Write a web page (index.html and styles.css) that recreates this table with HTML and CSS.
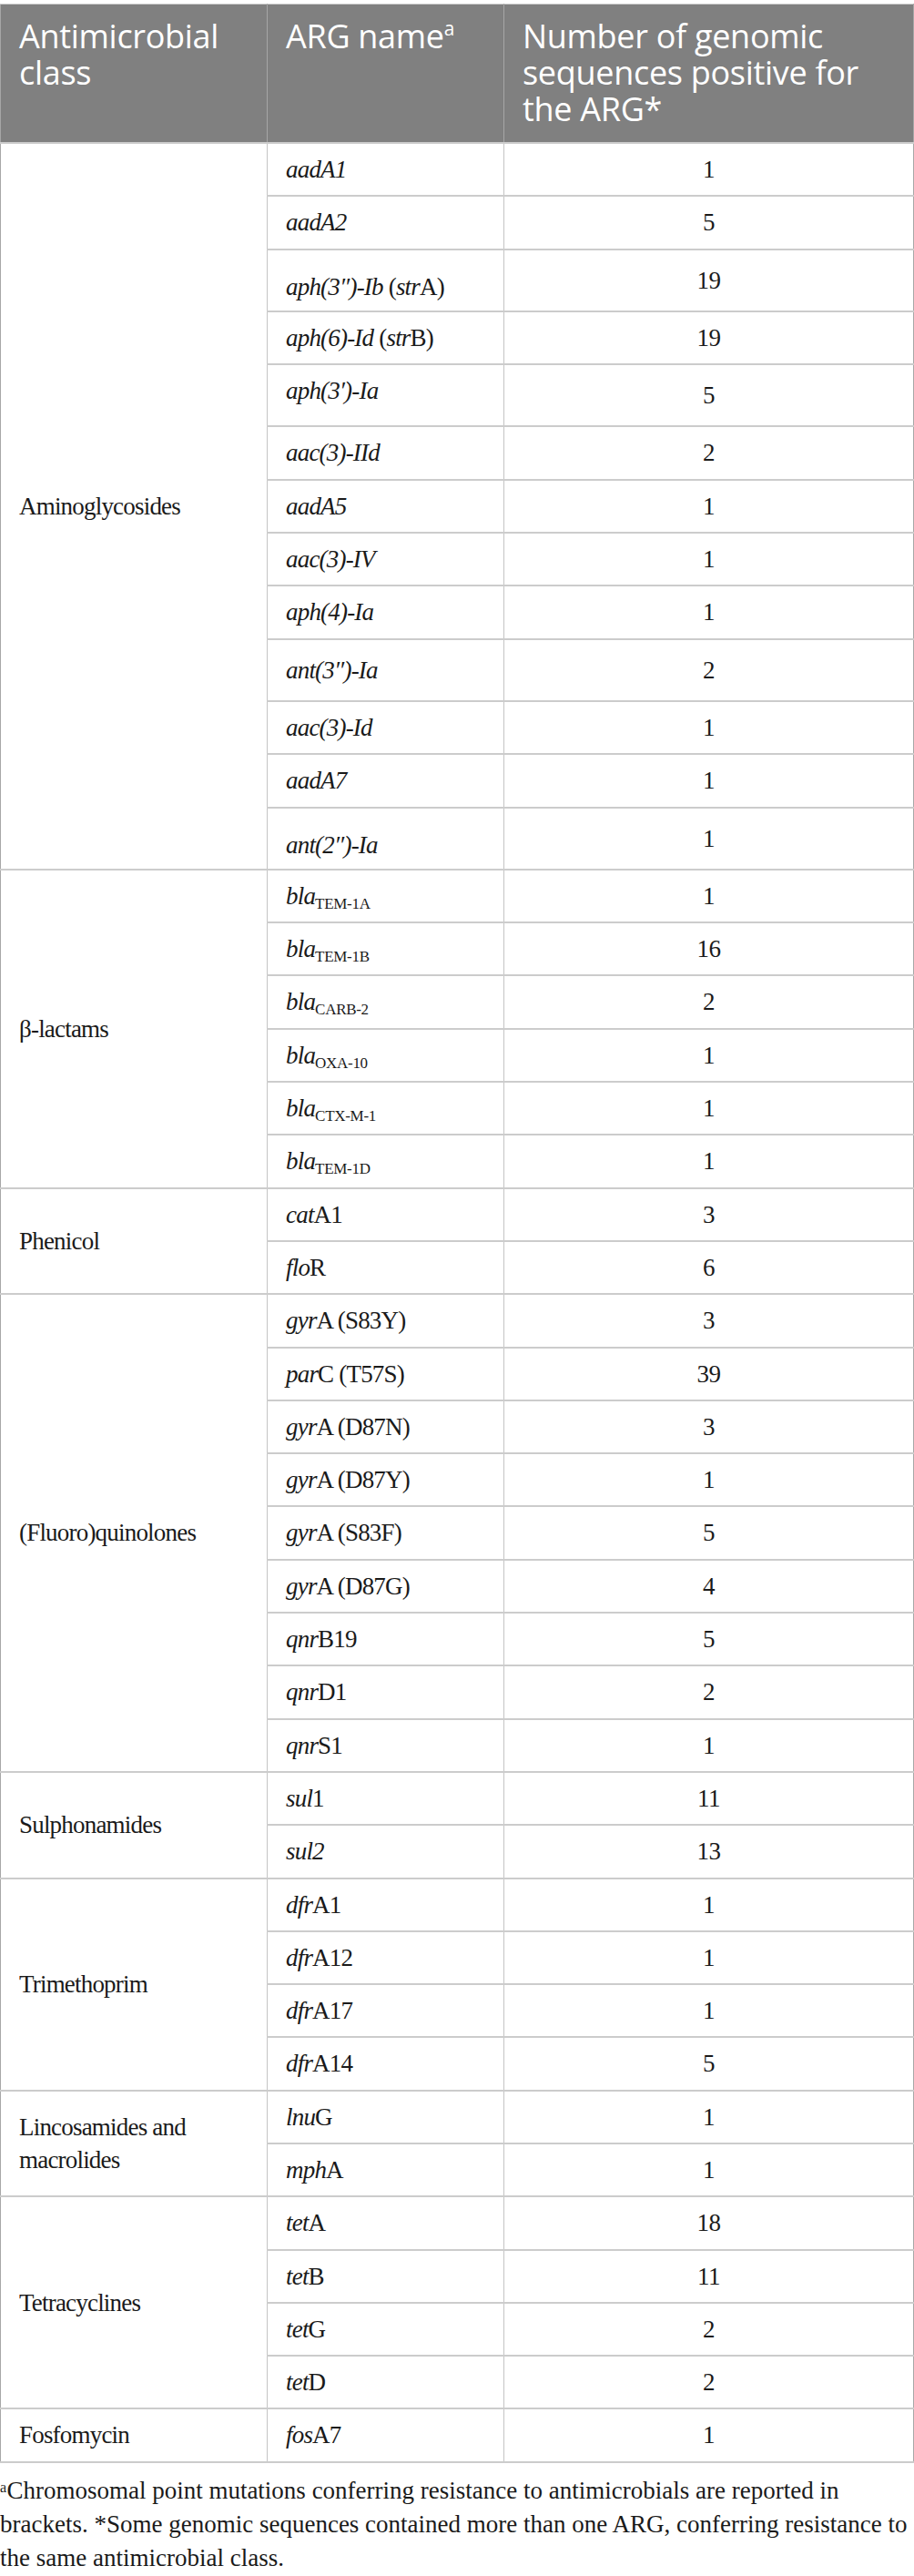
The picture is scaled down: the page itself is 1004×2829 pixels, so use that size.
FILE: index.html
```html
<!DOCTYPE html>
<html lang="en">
<head>
<meta charset="utf-8">
<title>ARG table</title>
<link rel="stylesheet" href="styles.css">
</head>
<body>
<table class="arg-table">
  <colgroup>
    <col class="c1">
    <col class="c2">
    <col class="c3">
  </colgroup>
  <thead>
    <tr>
      <th>Antimicrobial class</th>
      <th>ARG name<sup>a</sup></th>
      <th>Number of genomic sequences positive for the ARG*</th>
    </tr>
  </thead>
  <tbody class="grp">
    <tr><td class="cls" rowspan="13">Aminoglycosides</td><td><i>aadA1</i></td><td class="num">1</td></tr>
    <tr><td><i>aadA2</i></td><td class="num">5</td></tr>
    <tr class="tall"><td class="low"><i>aph(3″)-Ib</i> (<i>str</i>A)</td><td class="num">19</td></tr>
    <tr><td><i>aph(6)-Id</i> (<i>str</i>B)</td><td class="num">19</td></tr>
    <tr class="tall"><td class="high"><i>aph(3′)-Ia</i></td><td class="num">5</td></tr>
    <tr><td><i>aac(3)-IId</i></td><td class="num">2</td></tr>
    <tr><td><i>aadA5</i></td><td class="num">1</td></tr>
    <tr><td><i>aac(3)-IV</i></td><td class="num">1</td></tr>
    <tr><td><i>aph(4)-Ia</i></td><td class="num">1</td></tr>
    <tr class="tall"><td class="mid"><i>ant(3″)-Ia</i></td><td class="num">2</td></tr>
    <tr><td><i>aac(3)-Id</i></td><td class="num">1</td></tr>
    <tr><td><i>aadA7</i></td><td class="num">1</td></tr>
    <tr class="tall"><td class="low"><i>ant(2″)-Ia</i></td><td class="num">1</td></tr>
  </tbody>
  <tbody class="grp">
    <tr><td class="cls" rowspan="6">β-lactams</td><td><i>bla</i><sub>TEM-1A</sub></td><td class="num">1</td></tr>
    <tr><td><i>bla</i><sub>TEM-1B</sub></td><td class="num">16</td></tr>
    <tr><td><i>bla</i><sub>CARB-2</sub></td><td class="num">2</td></tr>
    <tr><td><i>bla</i><sub>OXA-10</sub></td><td class="num">1</td></tr>
    <tr><td><i>bla</i><sub>CTX-M-1</sub></td><td class="num">1</td></tr>
    <tr><td><i>bla</i><sub>TEM-1D</sub></td><td class="num">1</td></tr>
  </tbody>
  <tbody class="grp">
    <tr><td class="cls" rowspan="2">Phenicol</td><td><i>cat</i>A1</td><td class="num">3</td></tr>
    <tr><td><i>flo</i>R</td><td class="num">6</td></tr>
  </tbody>
  <tbody class="grp">
    <tr><td class="cls" rowspan="9">(Fluoro)quinolones</td><td><i>gyr</i>A (S83Y)</td><td class="num">3</td></tr>
    <tr><td><i>par</i>C (T57S)</td><td class="num">39</td></tr>
    <tr><td><i>gyr</i>A (D87N)</td><td class="num">3</td></tr>
    <tr><td><i>gyr</i>A (D87Y)</td><td class="num">1</td></tr>
    <tr><td><i>gyr</i>A (S83F)</td><td class="num">5</td></tr>
    <tr><td><i>gyr</i>A (D87G)</td><td class="num">4</td></tr>
    <tr><td><i>qnr</i>B19</td><td class="num">5</td></tr>
    <tr><td><i>qnr</i>D1</td><td class="num">2</td></tr>
    <tr><td><i>qnr</i>S1</td><td class="num">1</td></tr>
  </tbody>
  <tbody class="grp">
    <tr><td class="cls" rowspan="2">Sulphonamides</td><td><i>sul</i>1</td><td class="num">11</td></tr>
    <tr><td><i>sul2</i></td><td class="num">13</td></tr>
  </tbody>
  <tbody class="grp">
    <tr><td class="cls" rowspan="4">Trimethoprim</td><td><i>dfr</i>A1</td><td class="num">1</td></tr>
    <tr><td><i>dfr</i>A12</td><td class="num">1</td></tr>
    <tr><td><i>dfr</i>A17</td><td class="num">1</td></tr>
    <tr><td><i>dfr</i>A14</td><td class="num">5</td></tr>
  </tbody>
  <tbody class="grp">
    <tr><td class="cls" rowspan="2">Lincosamides and macrolides</td><td><i>lnu</i>G</td><td class="num">1</td></tr>
    <tr><td><i>mph</i>A</td><td class="num">1</td></tr>
  </tbody>
  <tbody class="grp">
    <tr><td class="cls" rowspan="4">Tetracyclines</td><td><i>tet</i>A</td><td class="num">18</td></tr>
    <tr><td><i>tet</i>B</td><td class="num">11</td></tr>
    <tr><td><i>tet</i>G</td><td class="num">2</td></tr>
    <tr><td><i>tet</i>D</td><td class="num">2</td></tr>
  </tbody>
  <tbody class="grp">
    <tr><td class="cls">Fosfomycin</td><td><i>fos</i>A7</td><td class="num">1</td></tr>
  </tbody>
</table>
<p class="note">ᵃChromosomal point mutations conferring resistance to antimicrobials are reported in brackets. *Some genomic sequences contained more than one ARG, conferring resistance to the same antimicrobial class.</p>
</body>
</html>
```

FILE: styles.css
```css
html, body {
  margin: 0;
  padding: 0;
  background: #ffffff;
}

body {
  padding-top: 4px;
  font-family: "Liberation Serif", "Times New Roman", serif;
  color: #1a1a1a;
}

.arg-table {
  width: 1003px;
  border-collapse: collapse;
  table-layout: fixed;
}

.c1 { width: 293px; }
.c2 { width: 260px; }
.c3 { width: 450px; }

.arg-table th {
  background: #808080;
  color: #ffffff;
  font-family: "Open Sans", "Noto Sans", sans-serif;
  font-weight: 400;
  font-size: 36px;
  line-height: 40px;
  letter-spacing: -0.3px;
  text-align: left;
  vertical-align: top;
  padding: 15px 20px 16px 20px;
  height: 120px;
  border: 1px solid #a6a6a6;
  border-top: 1px solid #c8c8c8;
}

.arg-table th sup {
  font-size: 58%;
  line-height: 0;
  vertical-align: 14px;
}

.arg-table td {
  font-size: 27px;
  line-height: 36.3px;
  letter-spacing: -0.8px;
  padding: 10px 20px;
  vertical-align: middle;
  border-left: 1px solid #c4c4c4;
  border-right: 1px solid #c4c4c4;
  border-top: 2px solid #cccccc;
  border-bottom: 2px solid #cccccc;
}

.arg-table td.cls {
  border-left: 1px solid #a8a8a8;
}

.arg-table td.num {
  text-align: center;
  letter-spacing: -0.5px;
  border-right: 1px solid #a8a8a8;
}

.grp {
  border-top: 2px solid #bdbdbd;
}

.arg-table tr.tall td {
  padding-top: 15px;
  padding-bottom: 15px;
}

.arg-table tr.tall td.low {
  padding-top: 22px;
  padding-bottom: 8px;
}

.arg-table tr.tall td.high {
  padding-top: 10px;
  padding-bottom: 20px;
}

.arg-table sub {
  font-size: 17px;
  letter-spacing: -0.3px;
  line-height: 0;
  vertical-align: -5px;
}

.note {
  margin: 12px 0 0 0;
  width: 1003px;
  font-size: 27px;
  line-height: 37px;
  color: #1a1a1a;
}
```
